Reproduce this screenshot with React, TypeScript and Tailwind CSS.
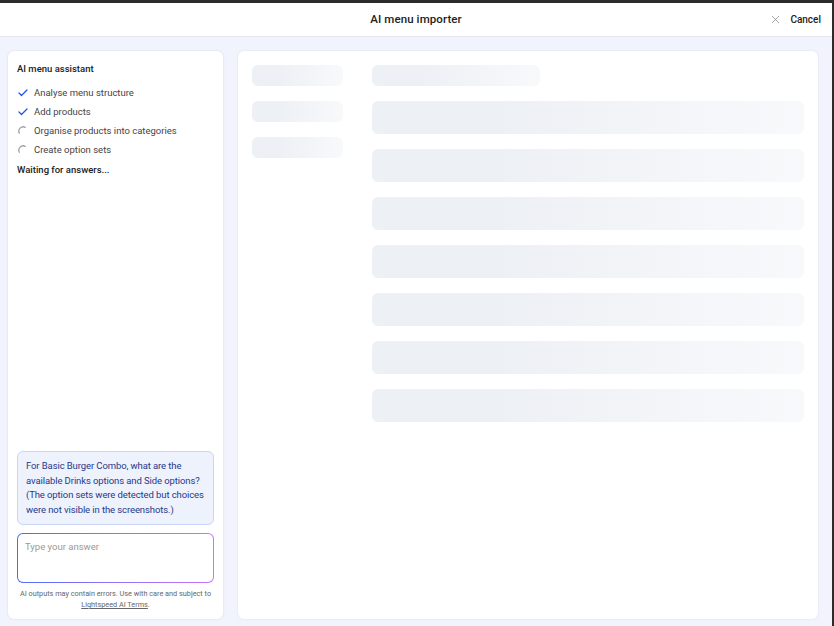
import { Check, X } from "lucide-react";

const steps = [
  { label: "Analyse menu structure", done: true },
  { label: "Add products", done: true },
  { label: "Organise products into categories", done: false },
  { label: "Create option sets", done: false },
];

function Spinner() {
  return (
    <svg width="11" height="11" viewBox="0 0 11 11" fill="none">
      <path
        d="M1.3 7.2 A4.4 4.4 0 0 1 7.2 1.3"
        stroke="#9ca0a8"
        strokeWidth="1.3"
        strokeLinecap="round"
      />
    </svg>
  );
}

function Bar({ className }: { className: string }) {
  return (
    <div
      className={`rounded-md bg-gradient-to-r from-[#edf0f5] from-30% to-[#f8f9fb] ${className}`}
    />
  );
}

export default function App() {
  return (
    <div
      className="flex h-[626px] w-[834px] flex-col overflow-hidden border-t-[3px] border-r-2 border-[#2b2b2b] bg-[#f1f4fd] text-[#333]"
      style={{ fontFamily: "Roboto, 'Noto Sans', sans-serif" }}
    >
      {/* header */}
      <div className="relative flex h-[34px] shrink-0 items-center justify-center border-b border-[#e6e8ee] bg-white">
        <span className="text-[11.5px] font-medium tracking-[0.1px] text-[#222]">AI menu importer</span>
        <button className="absolute right-[11px] flex items-center gap-[8px] text-[10px] font-medium text-[#222]">
          <X size={13} strokeWidth={1.2} className="text-[#777]" />
          Cancel
        </button>
      </div>

      <div className="flex min-h-0 flex-1 gap-[15px] pl-[8px] pr-[14px] pt-[14px] pb-[7px]">
        {/* assistant */}
        <div className="flex w-[215px] shrink-0 flex-col rounded-md bg-white px-[9px] pt-[11px] pb-[9px] shadow-[0_0_2px_rgba(120,130,160,0.25)]">
          <div className="text-[9.5px] font-medium text-[#222]">AI menu assistant</div>
          <div className="mt-[11px] flex flex-col gap-[7px]">
            {steps.map((s) => (
              <div key={s.label} className="flex h-[12px] items-center gap-[5px] text-[9.5px] text-[#444]">
                <span className="flex w-[12px] justify-center">
                  {s.done ? (
                    <Check size={12} strokeWidth={2.6} className="text-[#2458d8]" />
                  ) : (
                    <Spinner />
                  )}
                </span>
                {s.label}
              </div>
            ))}
          </div>
          <div className="mt-[7px] text-[9.5px] font-medium text-[#222]">Waiting for answers...</div>

          <div className="mt-auto rounded-md border border-[#c9d5f6] bg-[#eef2fd] pl-[8px] pr-[4px] pt-[7px] pb-[7px] text-[9.5px] leading-[14.5px] tracking-[-0.1px] text-[#24398a]">
            For Basic Burger Combo, what are the available Drinks options and Side options? (The option sets were detected but choices were not visible in the screenshots.)
          </div>
          <div className="mt-[8px] rounded-md bg-gradient-to-r from-[#4d6bf5] to-[#c874fa] p-px">
            <div className="h-[48px] rounded-[5px] bg-white px-[7px] pt-[6px] text-[9.5px] text-[#999]">
              Type your answer
            </div>
          </div>
          <p className="mt-[5px] text-center text-[7.3px] leading-[11px] text-[#666]">
            AI outputs may contain errors. Use with care and subject to{" "}
            <span className="underline">Lightspeed AI Terms</span>.
          </p>
        </div>

        {/* preview skeleton */}
        <div className="flex flex-1 gap-[29px] rounded-md bg-white px-[14px] pt-[14px] shadow-[0_0_2px_rgba(120,130,160,0.2)]">
          <div className="flex w-[91px] shrink-0 flex-col gap-[15px]">
            <Bar className="h-[21px]" />
            <Bar className="h-[21px]" />
            <Bar className="h-[21px]" />
          </div>
          <div className="flex flex-1 flex-col gap-[15px]">
            <Bar className="h-[21px] w-[168px]" />
            {[0, 1, 2, 3, 4, 5, 6].map((i) => (
              <Bar key={i} className="h-[33px]" />
            ))}
          </div>
        </div>
      </div>
    </div>
  );
}
